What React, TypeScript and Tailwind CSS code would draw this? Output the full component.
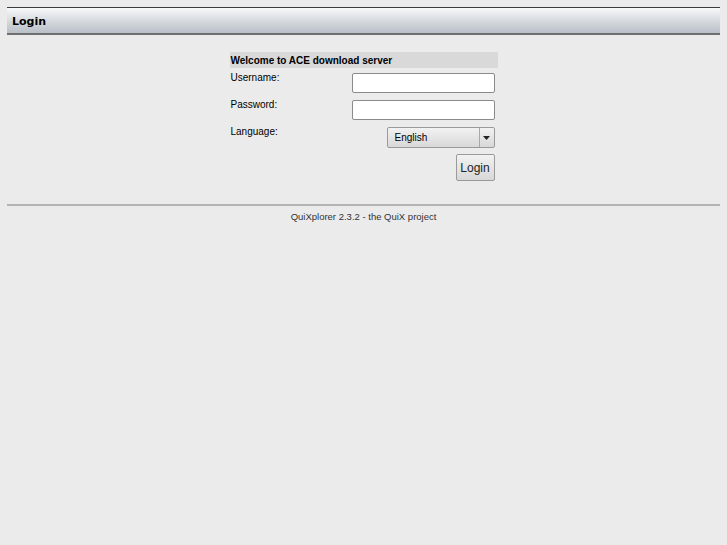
const App = () => {
  return (
    <div className="min-h-[545px] bg-[#ebebeb] px-[7px] pt-[7px] text-[#000]" style={{ fontFamily: '"Liberation Sans", Arial, sans-serif' }}>
      {/* title bar */}
      <div className="h-[28px] border-t border-t-[#3c3c3c] border-b-2 border-b-[#6e6e6e] bg-gradient-to-b from-[#f7f8f9] to-[#b9bfc7] flex items-center px-[5px]">
        <span className="text-[11px] font-bold mt-[3px]" style={{ fontFamily: '"DejaVu Sans", sans-serif' }}>Login</span>
      </div>

      <div className="flex justify-center mt-[17px]">
        <div className="w-[268px]">
          <div className="h-[16px] bg-[#d9d9d9] text-[10px] font-bold pl-[1px] flex items-center">
            Welcome to ACE download server
          </div>

          <div className="flex justify-between items-start mt-[5px]">
            <span className="text-[10px] leading-[10px] pl-[1px]">Username:</span>
            <input type="text" className="w-[143px] h-[20px] bg-white border border-[#8a8a8a] rounded-[2px] mr-[3px] outline-none" />
          </div>
          <div className="flex justify-between items-start mt-[7px]">
            <span className="text-[10px] leading-[10px] pl-[1px]">Password:</span>
            <input type="password" className="w-[143px] h-[20px] bg-white border border-[#8a8a8a] rounded-[2px] mr-[3px] outline-none" />
          </div>
          <div className="flex justify-between items-start mt-[7px]">
            <span className="text-[10px] leading-[10px] pl-[1px]">Language:</span>
            <div className="w-[108px] h-[21px] mr-[3px] flex border border-[#9a9a9a] rounded-[2px] bg-gradient-to-b from-[#f2f2f2] to-[#d8d8d8]">
              <span className="flex-1 text-[10px] pl-[7px] flex items-center">English</span>
              <span className="w-[15px] border-l border-l-[#a8a8a8] flex items-center justify-center">
                <svg width="7" height="4" viewBox="0 0 7 4"><path d="M0 0h7L3.5 4z" fill="#222" /></svg>
              </span>
            </div>
          </div>
          <div className="flex justify-end mt-[6px]">
            <button className="w-[39px] h-[27px] mr-[3px] border border-[#9a9a9a] rounded-[2px] bg-gradient-to-b from-[#f2f2f2] to-[#d8d8d8] text-[12px] text-[#222]">
              Login
            </button>
          </div>
        </div>
      </div>

      <div className="mt-[23px] border-t-2 border-t-[#b4b4b4]" />
      <div className="text-center text-[9.5px] text-[#333] mt-[4px]">QuiXplorer 2.3.2 - the QuiX project</div>
    </div>
  );
};

export default App;
